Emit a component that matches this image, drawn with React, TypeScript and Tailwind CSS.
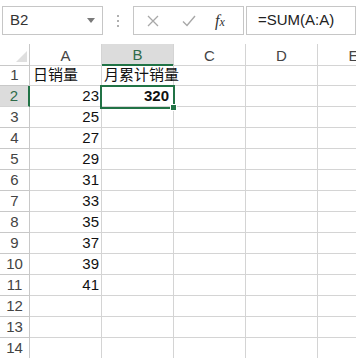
import React from "react";

const font = { fontFamily: '"Liberation Sans", "Noto Sans CJK SC", Arial, sans-serif' };

const colA: (string | null)[] = ["日销量", "23", "25", "27", "29", "31", "33", "35", "37", "39", "41", null, null, null];
const colB: (string | null)[] = ["月累计销量", "320", null, null, null, null, null, null, null, null, null, null, null, null];

export default function App() {
  const rows = Array.from({ length: 14 }, (_, i) => i + 1);
  return (
    <div className="w-[356px] h-[358px] overflow-hidden bg-white relative" style={font}>
      {/* top bar */}
      <div className="h-[44px] flex items-start pt-[6px] pl-[2px]">
        <div className="w-[101px] h-[29px] border border-[#c6c6c6] flex items-center justify-between pl-[7px] pr-[7px]">
          <span className="text-[15px] text-[#333]">B2</span>
          <svg width="8" height="5" viewBox="0 0 8 5"><polygon points="0,0 8,0 4,5" fill="#7a7a7a" /></svg>
        </div>
        <div className="w-[30px] h-[29px] flex flex-col items-center justify-center gap-[3px]">
          <div className="w-[2px] h-[2px] bg-[#b0b0b0]" />
          <div className="w-[2px] h-[2px] bg-[#b0b0b0]" />
          <div className="w-[2px] h-[2px] bg-[#b0b0b0]" />
        </div>
        <div className="w-[111px] h-[29px] border border-[#c6c6c6] flex items-center">
          <svg className="ml-[13px]" width="12" height="12" viewBox="0 0 12 12"><path d="M1 1 L11 11 M11 1 L1 11" stroke="#a8a8a8" strokeWidth="1.3" /></svg>
          <svg className="ml-[23px]" width="14" height="12" viewBox="0 0 14 12"><path d="M1 6.5 L5 10.5 L13 1" stroke="#a8a8a8" strokeWidth="1.4" fill="none" /></svg>
          <span className="ml-[19px] text-[16px] italic text-[#333]" style={{ fontFamily: '"Liberation Serif", serif' }}>f<span className="text-[12px]">x</span></span>
        </div>
        <div className="ml-[2px] flex-1 h-[29px] border border-[#c6c6c6] flex items-center pl-[11px]">
          <span className="text-[15px] text-[#222]">=SUM(A:A)</span>
        </div>
      </div>

      {/* grid */}
      <div className="relative">
        <div className="grid grid-cols-[30px_72px_72px_72px_72px_72px] auto-rows-[21px]">
          {/* header row */}
          <div className="h-[22px] border-r border-b border-[#c8c8c8] relative">
            <svg className="absolute left-[15px] top-[6px]" width="13" height="13" viewBox="0 0 13 13"><polygon points="12,1 12,12 1,12" fill="#dfdfdf" /></svg>
          </div>
          <div className="h-[22px] border-r border-b border-[#d4d4d4] flex items-end justify-center text-[15px] leading-[18px] text-[#444]">A</div>
          <div className="h-[22px] border-r border-[#d4d4d4] border-b-2 border-b-[#217346] bg-[#dcdcdc] flex items-end justify-center text-[15px] leading-[18px] text-[#2f6b4a]">B</div>
          <div className="h-[22px] border-r border-b border-[#d4d4d4] flex items-end justify-center text-[15px] leading-[18px] text-[#444]">C</div>
          <div className="h-[22px] border-r border-b border-[#d4d4d4] flex items-end justify-center text-[15px] leading-[18px] text-[#444]">D</div>
          <div className="h-[22px] border-r border-b border-[#d4d4d4] flex items-end justify-center text-[15px] leading-[18px] text-[#444]">E</div>

          {rows.map((r) => {
            const a = colA[r - 1];
            const b = colB[r - 1];
            const sel = r === 2;
            const isNum = (v: string | null) => v !== null && /^\d+$/.test(v);
            return (
              <React.Fragment key={r}>
                <div
                  className={
                    sel
                      ? "border-b border-[#d4d4d4] border-r-2 border-r-[#217346] bg-[#dcdcdc] flex items-center justify-center text-[15px] text-[#2f6b4a]"
                      : "border-r border-b border-[#c8c8c8] flex items-center justify-center text-[15px] text-[#444]"
                  }
                >
                  {r}
                </div>
                <div className={"border-r border-b border-[#d4d4d4] flex items-center text-[15px] text-[#111] whitespace-nowrap " + (isNum(a) ? "justify-end pr-[2px]" : "pl-[3px]")}>
                  {a}
                </div>
                <div className={"border-r border-b border-[#d4d4d4] flex items-center text-[15px] text-[#111] whitespace-nowrap overflow-visible " + (isNum(b) ? "justify-end pr-[4px] font-bold" : "pl-[2px]")}>
                  {b}
                </div>
                <div className="border-r border-b border-[#d4d4d4]" />
                <div className="border-r border-b border-[#d4d4d4]" />
                <div className="border-r border-b border-[#d4d4d4]" />
              </React.Fragment>
            );
          })}
        </div>
        {/* selection */}
        <div className="absolute left-[100px] top-[41px] w-[75px] h-[24px] border-2 border-[#217346] pointer-events-none" />
        <div className="absolute left-[170px] top-[60px] w-[7px] h-[7px] bg-[#217346] border border-white pointer-events-none" />
      </div>
    </div>
  );
}
